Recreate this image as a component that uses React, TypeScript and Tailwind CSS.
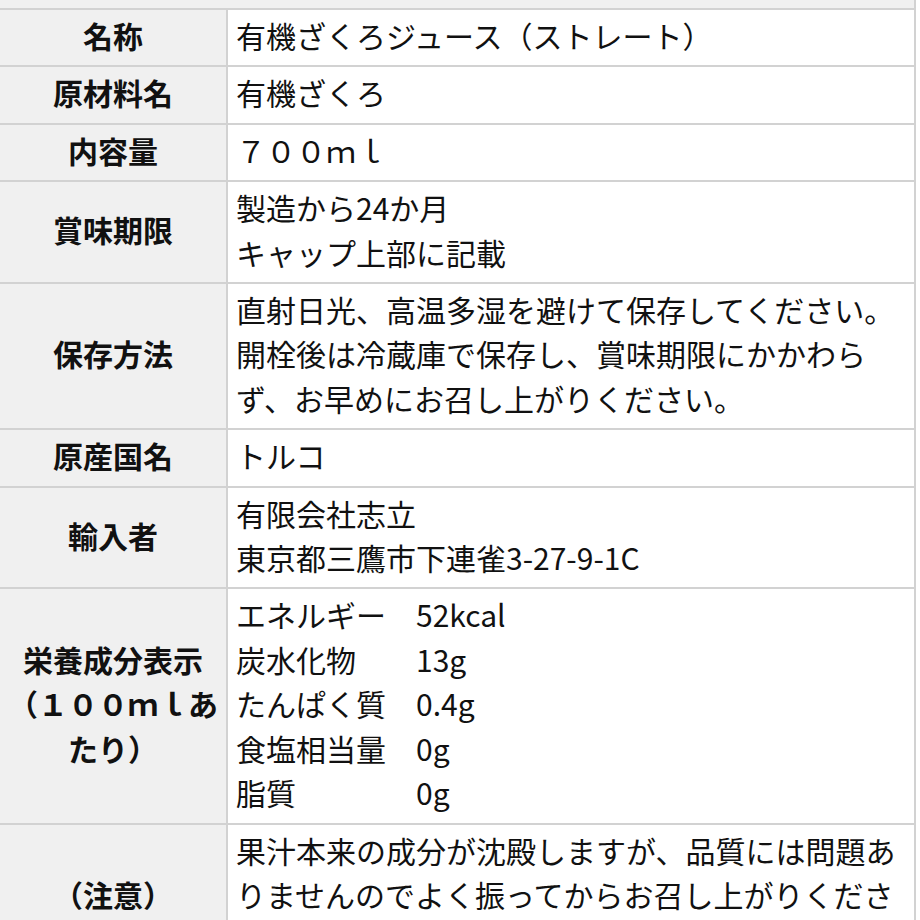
const rows: { label: string; value: React.ReactNode }[] = [
  { label: "名称", value: "有機ざくろジュース（ストレート）" },
  { label: "原材料名", value: "有機ざくろ" },
  { label: "内容量", value: "７００ｍｌ" },
  {
    label: "賞味期限",
    value: (
      <>
        製造から24か月
        <br />
        キャップ上部に記載
      </>
    ),
  },
  {
    label: "保存方法",
    value:
      "直射日光、高温多湿を避けて保存してください。開栓後は冷蔵庫で保存し、賞味期限にかかわらず、お早めにお召し上がりください。",
  },
  { label: "原産国名", value: "トルコ" },
  {
    label: "輸入者",
    value: (
      <>
        有限会社志立
        <br />
        東京都三鷹市下連雀3-27-9-1C
      </>
    ),
  },
];

const nutrition = [
  ["エネルギー", "52kcal"],
  ["炭水化物", "13g"],
  ["たんぱく質", "0.4g"],
  ["食塩相当量", "0g"],
  ["脂質", "0g"],
];

const Label = ({ children }: { children: React.ReactNode }) => (
  <div className="bg-[#f0f0f0] flex items-center justify-center text-center font-bold px-[6px] pt-[3px] pb-[8px]">
    <span>{children}</span>
  </div>
);

const Value = ({ children }: { children: React.ReactNode }) => (
  <div className="bg-white pl-[8px] pr-[8px] pt-[3px] pb-[8px]">{children}</div>
);

export default function App() {
  return (
    <div
      className="min-h-screen bg-white text-[#111] text-[30px] leading-[44.4px]"
      style={{ fontFamily: '"Noto Sans CJK JP", "Noto Sans", sans-serif' }}
    >
      <div className="w-[916px] border-r-2 border-[#d2d2d2] bg-[#d2d2d2]">
        {/* cropped row above */}
        <div className="h-[8px] bg-[#f0f0f0]" />

        <div className="grid grid-cols-[226px_1fr] gap-[2px] pt-[2px] pb-[2px]">
          {rows.map((r) => (
            <>
              <Label key={r.label + "-l"}>{r.label}</Label>
              <Value key={r.label + "-v"}>{r.value}</Value>
            </>
          ))}

          <Label>栄養成分表示（１００ｍｌあたり）</Label>
          <Value>
            <div className="grid grid-cols-[180px_1fr]">
              {nutrition.map(([k, v]) => (
                <>
                  <div key={k}>{k}</div>
                  <div key={k + v}>{v}</div>
                </>
              ))}
            </div>
          </Value>

          <Label>（注意）</Label>
          <Value>
            果汁本来の成分が沈殿しますが、品質には問題ありませんのでよく振ってからお召し上がりください。
          </Value>
        </div>
      </div>
    </div>
  );
}
